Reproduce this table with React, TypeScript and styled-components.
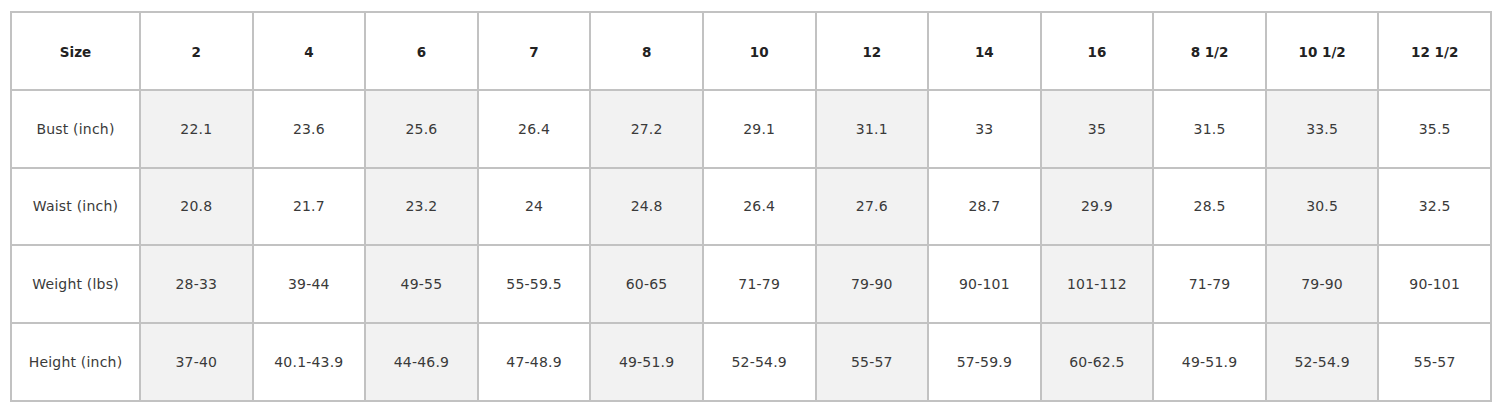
import React from "react";
import styled, { createGlobalStyle } from "styled-components";

const GlobalStyle = createGlobalStyle`
  html, body {
    margin: 0;
    padding: 0;
    background: #ffffff;
  }
  body {
    font-family: "DejaVu Sans", "Liberation Sans", sans-serif;
  }
`;

const Page = styled.div`
  padding: 11px 12px 0 10px;
`;

const Table = styled.div`
  display: grid;
  grid-template-columns: 129px repeat(12, 1fr);
  grid-auto-rows: 77.8px;
  width: 1482px;
  box-sizing: border-box;
  border-top: 2px solid #c2c2c2;
  border-left: 2px solid #c2c2c2;
`;

const Cell = styled.div<{ $shaded?: boolean; $head?: boolean }>`
  display: flex;
  align-items: center;
  justify-content: center;
  box-sizing: border-box;
  border-right: 2px solid #c2c2c2;
  border-bottom: 2px solid #c2c2c2;
  background: ${(p) => (p.$shaded ? "#f2f2f2" : "#ffffff")};
  font-size: ${(p) => (p.$head ? "13.5px" : "14px")};
  font-weight: ${(p) => (p.$head ? 700 : 400)};
  color: ${(p) => (p.$head ? "#222222" : "#3a3a3a")};
  white-space: nowrap;
  letter-spacing: ${(p) => (p.$head ? "0" : "0.2px")};
  padding-top: ${(p) => (p.$head ? "2px" : "0")};
`;

const sizes = ["2", "4", "6", "7", "8", "10", "12", "14", "16", "8 1/2", "10 1/2", "12 1/2"];

const rows: { label: string; values: string[] }[] = [
  { label: "Bust (inch)", values: ["22.1", "23.6", "25.6", "26.4", "27.2", "29.1", "31.1", "33", "35", "31.5", "33.5", "35.5"] },
  { label: "Waist (inch)", values: ["20.8", "21.7", "23.2", "24", "24.8", "26.4", "27.6", "28.7", "29.9", "28.5", "30.5", "32.5"] },
  { label: "Weight (lbs)", values: ["28-33", "39-44", "49-55", "55-59.5", "60-65", "71-79", "79-90", "90-101", "101-112", "71-79", "79-90", "90-101"] },
  { label: "Height (inch)", values: ["37-40", "40.1-43.9", "44-46.9", "47-48.9", "49-51.9", "52-54.9", "55-57", "57-59.9", "60-62.5", "49-51.9", "52-54.9", "55-57"] },
];

export default function App() {
  return (
    <>
      <GlobalStyle />
      <Page>
        <Table>
          <Cell $head>Size</Cell>
          {sizes.map((s) => (
            <Cell key={s} $head>
              {s}
            </Cell>
          ))}
          {rows.map((r) => (
            <React.Fragment key={r.label}>
              <Cell>{r.label}</Cell>
              {r.values.map((v, i) => (
                <Cell key={i} $shaded={i % 2 === 0}>
                  {v}
                </Cell>
              ))}
            </React.Fragment>
          ))}
        </Table>
      </Page>
    </>
  );
}
